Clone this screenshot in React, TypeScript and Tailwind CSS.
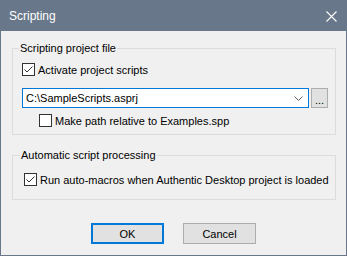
import React from "react";

const font = { fontFamily: "'Liberation Sans', Arial, sans-serif" };

function Check({ checked }: { checked?: boolean }) {
  return (
    <span className="flex h-[13px] w-[13px] shrink-0 items-center justify-center border border-[#333333] bg-white">
      {checked && (
        <svg width="11" height="11" viewBox="0 0 11 11">
          <polyline points="1.5,5.5 4,8 9.5,2.5" fill="none" stroke="#333333" strokeWidth="1" />
        </svg>
      )}
    </span>
  );
}

export default function App() {
  return (
    <div
      className="flex h-[256px] w-[347px] flex-col border border-[#687789] bg-[#f0f0f0] text-[11px] leading-[16px] text-black"
      style={font}
    >
      {/* title bar */}
      <div className="flex h-[30px] shrink-0 items-center justify-between bg-[#687789] pl-[8px] pr-[9px] text-white">
        <span className="text-[12px]">Scripting</span>
        <svg width="11" height="11" viewBox="0 0 11 11">
          <path d="M0.5 0.5 L10.5 10.5 M10.5 0.5 L0.5 10.5" stroke="#ffffff" strokeWidth="1.1" />
        </svg>
      </div>

      <div className="ml-[11px] mr-[10px] flex flex-col">
        {/* group 1 */}
        <fieldset className="mt-[9px] border border-[#dcdcdc] px-0">
          <legend className="ml-[6px] whitespace-nowrap px-[1px] leading-[16px]">Scripting project file</legend>
          <div className="flex flex-col pb-[6px] pl-[9px] pr-[7px] pt-[6px]">
            <label className="flex h-[15px] items-center gap-[3px] whitespace-nowrap">
              <Check checked />
              <span>Activate project scripts</span>
            </label>
            <div className="mt-[11px] flex h-[20px] gap-[2px]">
              <div className="flex flex-1 items-center justify-between border border-[#0078d7] bg-white pl-[3px] pr-[5px]">
                <span>C:\SampleScripts.asprj</span>
                <svg width="9" height="5" viewBox="0 0 9 5">
                  <polyline points="0.5,0.5 4.5,4.5 8.5,0.5" fill="none" stroke="#606060" strokeWidth="1" />
                </svg>
              </div>
              <div className="flex w-[17px] items-end justify-center border border-[#adadad] bg-[#e1e1e1] pb-[1px] leading-[12px]">
                ...
              </div>
            </div>
            <label className="ml-[17px] mt-[5px] flex h-[15px] items-center gap-[3px] whitespace-nowrap">
              <Check />
              <span>Make path relative to Examples.spp</span>
            </label>
          </div>
        </fieldset>

        {/* group 2 */}
        <fieldset className="mt-[12px] border border-[#dcdcdc] px-0">
          <legend className="ml-[7px] whitespace-nowrap px-[1px] leading-[16px]">Automatic script processing</legend>
          <div className="flex flex-col pb-[12px] pl-[11px] pt-[9px]">
            <label className="flex h-[15px] items-center gap-[3px] whitespace-nowrap">
              <Check checked />
              <span>Run auto-macros when Authentic Desktop project is loaded</span>
            </label>
          </div>
        </fieldset>

        {/* buttons */}
        <div className="mt-[23px] flex justify-center gap-[19px] pr-[1px]">
          <button className="h-[21px] w-[73px] border-2 border-[#0078d7] bg-[#e1e1e1] text-[11px]">OK</button>
          <button className="h-[21px] w-[73px] border border-[#adadad] bg-[#e1e1e1] text-[11px]">Cancel</button>
        </div>
      </div>
    </div>
  );
}
